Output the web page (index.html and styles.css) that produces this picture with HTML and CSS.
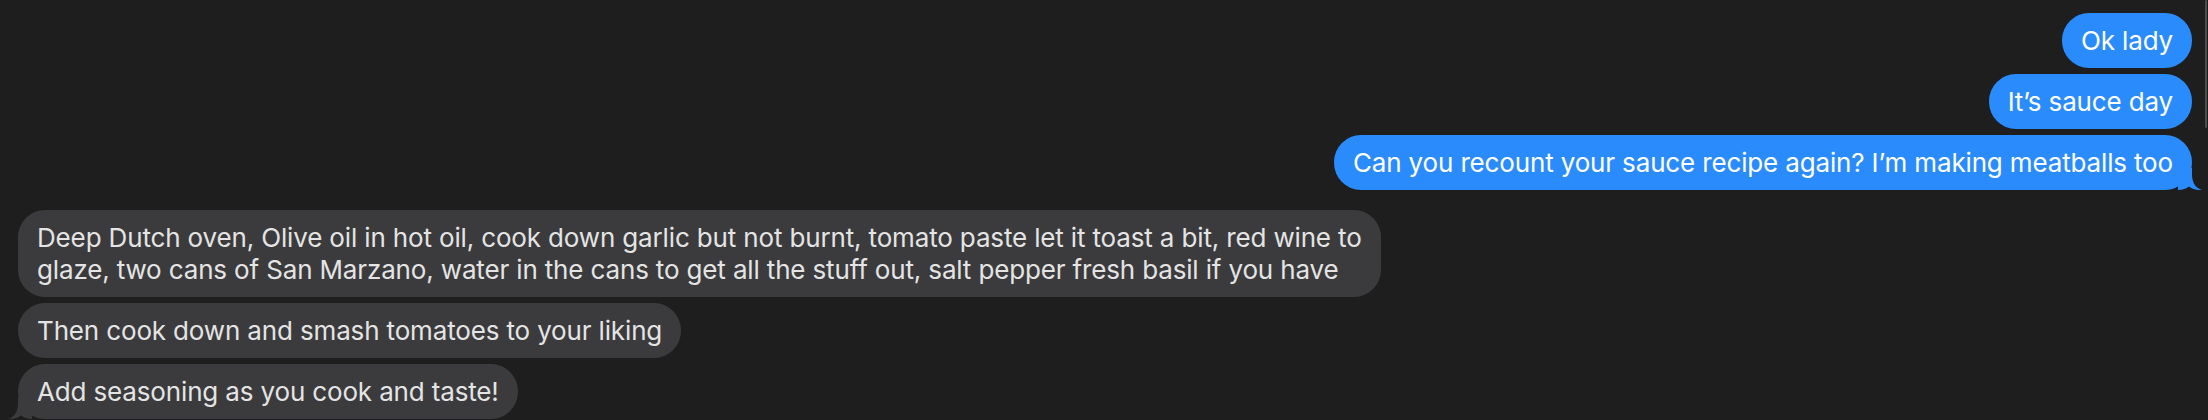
FILE: index.html
```html
<!DOCTYPE html>
<html lang="en">
<head>
<meta charset="utf-8">
<title>Messages</title>
<link rel="stylesheet" href="styles.css">
</head>
<body>
<div class="thread">
  <div class="group sent">
    <div class="bubble">Ok lady</div>
    <div class="bubble">It’s sauce day</div>
    <div class="bubble tailed">Can you recount your sauce recipe again? I’m making meatballs too<svg class="tail" viewBox="0 0 24 22" width="24" height="22"><path d="M0 0H14V6C14 14 17 20 24 22C19 22.5 14 21 11 18.5C8 20.5 5 22 0 22Z"/></svg></div>
  </div>
  <div class="group received">
    <div class="bubble">Deep Dutch oven, Olive oil in hot oil, cook down garlic but not burnt, tomato paste let it toast a bit, red wine to<br>glaze, two cans of San Marzano, water in the cans to get all the stuff out, salt pepper fresh basil if you have</div>
    <div class="bubble">Then cook down and smash tomatoes to your liking</div>
    <div class="bubble tailed">Add seasoning as you cook and taste!<svg class="tail" viewBox="0 0 24 22" width="24" height="22"><path d="M0 0H14V6C14 14 17 20 24 22C19 22.5 14 21 11 18.5C8 20.5 5 22 0 22Z"/></svg></div>
  </div>
</div>
<div class="scroll-thumb"></div>
</body>
</html>
```
FILE: styles.css
```css
html, body {
  margin: 0;
  padding: 0;
  background: #1e1e1e;
  height: 100%;
  overflow: hidden;
}
body {
  font-family: Inter, "Noto Sans", "Liberation Sans", sans-serif;
  font-size: 26px;
  line-height: 32px;
  letter-spacing: -0.15px;
}
.thread {
  display: flex;
  flex-direction: column;
  gap: 20px;
  padding: 13px 16px 0 18px;
}
.group {
  display: flex;
  flex-direction: column;
  gap: 6px;
}
.sent {
  align-items: flex-end;
}
.received {
  align-items: flex-start;
}
.bubble {
  position: relative;
  padding: 11.5px 19px;
  border-radius: 27px;
  white-space: nowrap;
}
.sent .bubble {
  background: #2a8bfd;
  color: #ffffff;
}
.received .bubble {
  background: #3b3b3d;
  color: #e4e4e4;
}
.tail {
  position: absolute;
  bottom: 0;
  display: block;
}
.sent .tail {
  right: -10px;
  fill: #2a8bfd;
}
.received .tail {
  left: -10px;
  fill: #3b3b3d;
  transform: scaleX(-1);
}
.scroll-thumb {
  position: fixed;
  top: 0;
  right: 1px;
  width: 2px;
  height: 128px;
  background: #4c4c4c;
  border-radius: 1px;
}
```
